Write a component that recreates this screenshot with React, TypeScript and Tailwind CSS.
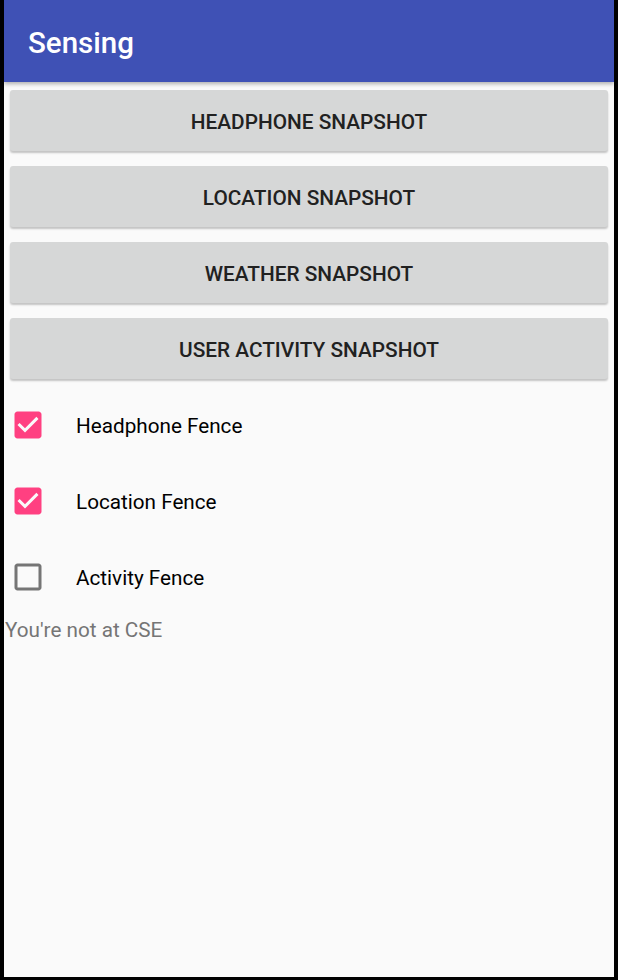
const buttons = [
  "HEADPHONE SNAPSHOT",
  "LOCATION SNAPSHOT",
  "WEATHER SNAPSHOT",
  "USER ACTIVITY SNAPSHOT",
];

const fences = [
  { label: "Headphone Fence", checked: true },
  { label: "Location Fence", checked: true },
  { label: "Activity Fence", checked: false },
];

function Box({ checked }: { checked: boolean }) {
  return (
    <svg viewBox="0 0 24 24" className="w-[36px] h-[36px]">
      {checked ? (
        <path
          fill="#ff4081"
          d="M19 3H5c-1.11 0-2 .9-2 2v14c0 1.1.89 2 2 2h14c1.11 0 2-.9 2-2V5c0-1.1-.89-2-2-2zm-9 14l-5-5 1.41-1.41L10 14.17l7.59-7.59L19 8l-9 9z"
        />
      ) : (
        <path
          fill="#757575"
          d="M19 5v14H5V5h14m0-2H5c-1.1 0-2 .9-2 2v14c0 1.1.9 2 2 2h14c1.1 0 2-.9 2-2V5c0-1.1-.9-2-2-2z"
        />
      )}
    </svg>
  );
}

export default function App() {
  return (
    <div className="bg-black pl-[4px] pr-[4px] pb-[3px] w-[618px] h-[980px] font-['Roboto',sans-serif]">
      <div className="bg-[#fafafa] h-full flex flex-col">
        {/* app bar */}
        <div className="h-[82px] shrink-0 bg-[#3f51b5] flex items-center pl-[24px] pt-[4px] shadow-[0_2px_4px_rgba(0,0,0,0.3)] relative z-10">
          <p className="text-white text-[29.5px] font-medium">Sensing</p>
        </div>

        <div className="flex flex-col pt-[8px] gap-[15px] px-[6px]">
          {buttons.map((b) => (
            <div
              key={b}
              className="h-[61px] bg-[#d6d7d7] rounded-[3px] shadow-[0_2px_2px_rgba(0,0,0,0.22)] flex items-center justify-center pt-[5px]"
            >
              <p className="text-[20.8px] font-medium text-[#212121]">{b}</p>
            </div>
          ))}
        </div>

        <div className="flex flex-col mt-[8px]">
          {fences.map((f) => (
            <div key={f.label} className="h-[76px] flex items-center pl-[5.5px]">
              <Box checked={f.checked} />
              <p className="ml-[30.5px] pt-[3px] text-[20.7px] text-black">{f.label}</p>
            </div>
          ))}
        </div>
        <p className="pl-[1px] text-[20.7px] text-[#757575]">You're not at CSE</p>
      </div>
    </div>
  );
}
